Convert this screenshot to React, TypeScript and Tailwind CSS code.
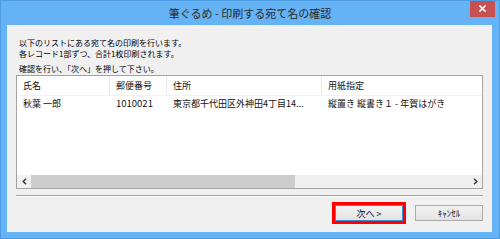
import React from "react";

export default function App() {
  return (
    <div className="w-[500px] h-[239px] bg-[#65b3f4] border border-[#4c9ce3] flex flex-col overflow-hidden font-['Noto_Sans_CJK_JP',sans-serif] text-[#111]">
      {/* Title bar */}
      <div className="h-[24px] grid grid-cols-[1fr_auto_1fr] items-start shrink-0">
        <div />
        <div className="text-[11px] leading-[24px] text-[#2a2a2a] whitespace-nowrap">筆ぐるめ - 印刷する宛て名の確認</div>
        <div className="justify-self-end mr-[4px] -mt-px w-[25px] h-[17px] bg-[#c75050] flex items-center justify-center">
          <svg width="7" height="7" viewBox="0 0 7 7">
            <path d="M1 1 L6 6 M6 1 L1 6" stroke="#ffffff" strokeWidth="1.6" strokeLinecap="square" />
          </svg>
        </div>
      </div>

      {/* Client area */}
      <div className="ml-[6px] mr-[7px] h-[207px] bg-[#f0f0f0] border border-[#e3f1fd] flex flex-col shrink-0">
        <div className="pl-[11px] pt-[11px] text-[8px] leading-[11px] whitespace-nowrap text-black">
          <div>以下のリストにある宛て名の印刷を行います。</div>
          <div>各レコード1部ずつ、合計1枚印刷されます。</div>
          <div className="mt-[4px]">確認を行い、「次へ」を押して下さい。</div>
        </div>

        {/* List */}
        <div className="ml-[8px] mt-px w-[467px] h-[114px] border border-[#a3a3a3] bg-white flex flex-col text-[9px]">
          <div className="h-[20px] flex border-b border-[#f0f2f5] items-center shrink-0">
            <div className="w-[93px] h-full pl-[6px] flex items-center border-r border-[#e6eaf0]">氏名</div>
            <div className="w-[57px] h-full pl-[6px] flex items-center border-r border-[#e6eaf0]">郵便番号</div>
            <div className="w-[155px] h-full pl-[6px] flex items-center border-r border-[#e6eaf0]">住所</div>
            <div className="flex-1 h-full pl-[6px] flex items-center">用紙指定</div>
          </div>
          <div className="flex-1">
            <div className="h-[15px] flex items-center whitespace-nowrap">
              <div className="w-[93px] pl-[6px]">秋葉 一郎</div>
              <div className="w-[57px] pl-[6px] text-[9.5px]">1010021</div>
              <div className="w-[155px] pl-[6px]">東京都千代田区外神田4丁目14...</div>
              <div className="flex-1 pl-[6px]">縦置き 縦書き１ - 年賀はがき</div>
            </div>
          </div>
          {/* Horizontal scrollbar */}
          <div className="h-[13px] flex bg-[#f0f0f0] shrink-0">
            <div className="w-[14px] h-full flex items-center justify-center">
              <svg width="5" height="7" viewBox="0 0 5 7">
                <path d="M4 0.8 L1.2 3.5 L4 6.2" stroke="#333" strokeWidth="1.4" fill="none" />
              </svg>
            </div>
            <div className="w-[264px] h-full bg-[#cdcdcd]" />
            <div className="flex-1" />
            <div className="w-[14px] h-full flex items-center justify-center">
              <svg width="5" height="7" viewBox="0 0 5 7">
                <path d="M1 0.8 L3.8 3.5 L1 6.2" stroke="#333" strokeWidth="1.4" fill="none" />
              </svg>
            </div>
          </div>
        </div>

        {/* Separator */}
        <div className="ml-[8px] mt-[6px] w-[467px] h-[2px] border-t border-[#a0a0a0] border-b border-b-white" />

        {/* Buttons */}
        <div className="mt-[5px] pr-[8px] flex justify-end items-center">
          <div className="border-[3px] border-[#ff0000] mr-[9px]">
            <div className="w-[68px] h-[16px] border border-[#3c8fe0] bg-gradient-to-b from-[#f2f2f2] to-[#e3e3e3] flex items-center justify-center text-[9px] leading-none">
              次へ &gt;
            </div>
          </div>
          <div className="w-[68px] h-[16px] border border-[#acacac] bg-gradient-to-b from-[#f2f2f2] to-[#e3e3e3] flex items-center justify-center text-[9px] leading-none">
            ｷｬﾝｾﾙ
          </div>
        </div>
      </div>
    </div>
  );
}
